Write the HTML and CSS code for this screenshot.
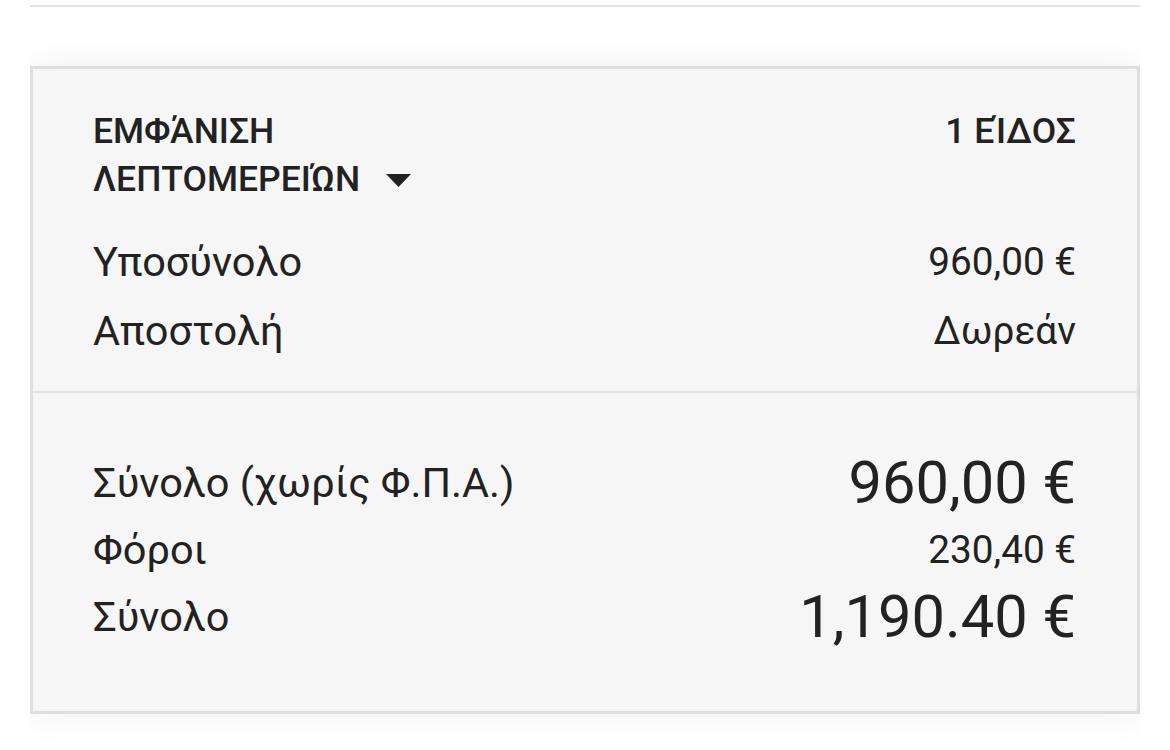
FILE: index.html
```html
<!DOCTYPE html>
<html lang="el">
<head>
<meta charset="utf-8">
<link rel="stylesheet" href="styles.css">
</head>
<body>
<div class="topline"></div>
<div class="shadow-clip">
  <section class="card">
    <div class="card-top">
      <div class="head">
        <div class="toggle">ΕΜΦΆΝΙΣΗ<br>ΛΕΠΤΟΜΕΡΕΙΏΝ <svg class="caret" width="25" height="13" viewBox="0 0 25 13"><polygon points="0,0 25,0 12.5,13" fill="#222"/></svg></div>
        <div class="count">1 ΕΊΔΟΣ</div>
      </div>
      <div class="row"><span class="label">Υποσύνολο</span><span class="value">960,00 €</span></div>
      <div class="row"><span class="label">Αποστολή</span><span class="value">Δωρεάν</span></div>
    </div>
    <div class="card-bottom">
      <div class="trow"><span class="label">Σύνολο (χωρίς Φ.Π.Α.)</span><span class="big">960,00 €</span></div>
      <div class="trow"><span class="label">Φόροι</span><span class="value">230,40 €</span></div>
      <div class="trow"><span class="label">Σύνολο</span><span class="big">1,190.40 €</span></div>
    </div>
  </section>
</div>
</body>
</html>
```
FILE: styles.css
```css
html, body {
  margin: 0;
  padding: 0;
  background: #fff;
}
body {
  font-family: Roboto, "Noto Sans", sans-serif;
  color: #222;
  width: 1170px;
  height: 750px;
  overflow: hidden;
}
.topline {
  margin: 5px 30px 0;
  height: 2px;
  background: #e2e2e2;
}
.shadow-clip {
  margin: 0 30px;
  padding: 59px 0 60px;
  overflow: hidden;
}
.card {
  background: #f6f6f6;
  border: 3px solid #dedede;
  box-shadow: 0 0 34px rgba(0, 0, 0, 0.07);
}
.card-top {
  padding: 38px 61px 26px 60px;
  border-bottom: 2px solid #e2e2e2;
}
.head {
  display: flex;
  justify-content: space-between;
  align-items: flex-start;
  font-weight: 500;
  font-size: 35.5px;
  line-height: 48px;
  margin-bottom: 24px;
}
.caret {
  margin-left: 17px;
  vertical-align: 4px;
}
.row {
  display: flex;
  justify-content: space-between;
  align-items: center;
  height: 69px;
}
.label {
  font-size: 41.5px;
}
.value {
  font-size: 38.7px;
}
.card-bottom {
  padding: 56px 61px 61px 60px;
}
.trow {
  display: flex;
  justify-content: space-between;
  align-items: center;
  height: 67px;
}
.big {
  font-size: 59.6px;
}
```
